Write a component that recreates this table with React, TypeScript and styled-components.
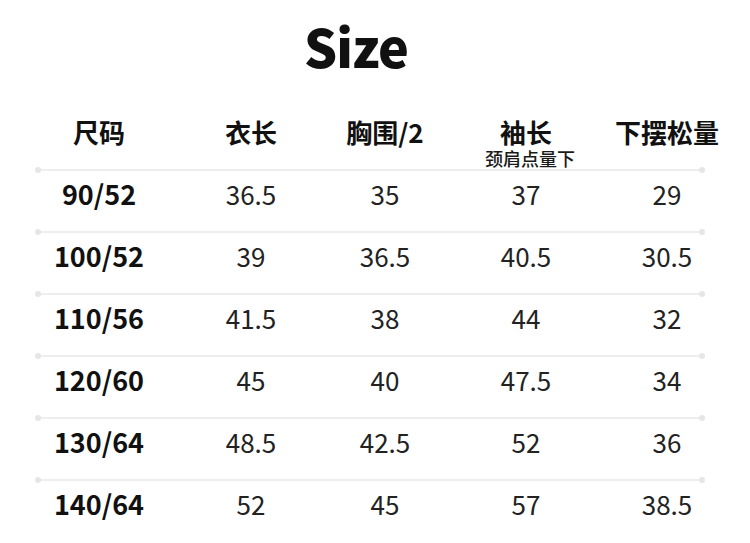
import React from "react";
import styled, { createGlobalStyle } from "styled-components";

// -------------------- Global --------------------
const GlobalStyle = createGlobalStyle`
  html, body {
    margin: 0;
    padding: 0;
    background: #ffffff;
  }
  body {
    font-family: "Noto Sans CJK SC", "Noto Sans", sans-serif;
    color: #141414;
  }
`;

// -------------------- Styles --------------------
const Page = styled.div`
  width: 750px;
  height: 543px;
  overflow: hidden;
  background: #ffffff;
`;

const Title = styled.h1`
  margin: 0;
  padding: 19px 38px 0 0;
  height: 54px;
  text-align: center;
  font-family: "Noto Sans CJK SC", "Noto Sans", sans-serif;
  font-size: 52px;
  line-height: 54px;
  font-weight: 900;
  color: #111111;
  letter-spacing: -1px;
`;

// column centres: 99, 251, 385, 526, 667
const Grid = styled.div`
  display: grid;
  grid-template-columns: 152px 152px 116px 166px 116px;
  padding-left: 23px;
`;

const HeadRow = styled(Grid)`
  margin-top: 46px;
  height: 48px;
  align-items: start;
`;

const HeadCell = styled.div`
  display: flex;
  flex-direction: column;
  align-items: center;
`;

const HeadText = styled.span`
  font-size: 26px;
  line-height: 26px;
  font-weight: 700;
  color: #111111;
  white-space: nowrap;
`;

const SubText = styled.span`
  margin-top: 4px;
  margin-left: 8px;
  font-size: 18px;
  line-height: 18px;
  font-weight: 500;
  color: #1a1a1a;
  white-space: nowrap;
`;

const Divider = styled.div`
  position: relative;
  margin: 2px 0 0 38px;
  width: 664px;
  height: 2px;
  background: #eeeeee;

  &::before,
  &::after {
    content: "";
    position: absolute;
    top: -2px;
    width: 6px;
    height: 6px;
    border-radius: 50%;
    background: #e6e6e6;
  }
  &::before {
    left: -3px;
  }
  &::after {
    right: -3px;
  }
`;

const BodyRow = styled(Grid)`
  height: 60px;
  box-sizing: border-box;
  padding-top: 10px;
  align-items: start;
`;

const RowDivider = styled(Divider)`
  margin-top: 0;
`;

const Cell = styled.div<{ $bold?: boolean }>`
  text-align: center;
  font-size: ${(p) => (p.$bold ? "27px" : "26px")};
  line-height: 26px;
  font-weight: ${(p) => (p.$bold ? 700 : 400)};
  color: ${(p) => (p.$bold ? "#111111" : "#222222")};
  white-space: nowrap;
`;

// -------------------- Data --------------------
const rows: string[][] = [
  ["90/52", "36.5", "35", "37", "29"],
  ["100/52", "39", "36.5", "40.5", "30.5"],
  ["110/56", "41.5", "38", "44", "32"],
  ["120/60", "45", "40", "47.5", "34"],
  ["130/64", "48.5", "42.5", "52", "36"],
  ["140/64", "52", "45", "57", "38.5"],
];

const App = (): JSX.Element => {
  return (
    <Page>
      <GlobalStyle />
      <Title>Size</Title>
      <HeadRow>
        <HeadCell><HeadText>尺码</HeadText></HeadCell>
        <HeadCell><HeadText>衣长</HeadText></HeadCell>
        <HeadCell><HeadText>胸围/2</HeadText></HeadCell>
        <HeadCell>
          <HeadText>袖长</HeadText>
          <SubText>颈肩点量下</SubText>
        </HeadCell>
        <HeadCell><HeadText>下摆松量</HeadText></HeadCell>
      </HeadRow>
      <Divider />
      {rows.map((row, i) => (
        <React.Fragment key={row[0]}>
          {i > 0 && <RowDivider />}
          <BodyRow>
            {row.map((value, j) => (
              <Cell key={j} $bold={j === 0}>{value}</Cell>
            ))}
          </BodyRow>
        </React.Fragment>
      ))}
    </Page>
  );
};

export default App;
